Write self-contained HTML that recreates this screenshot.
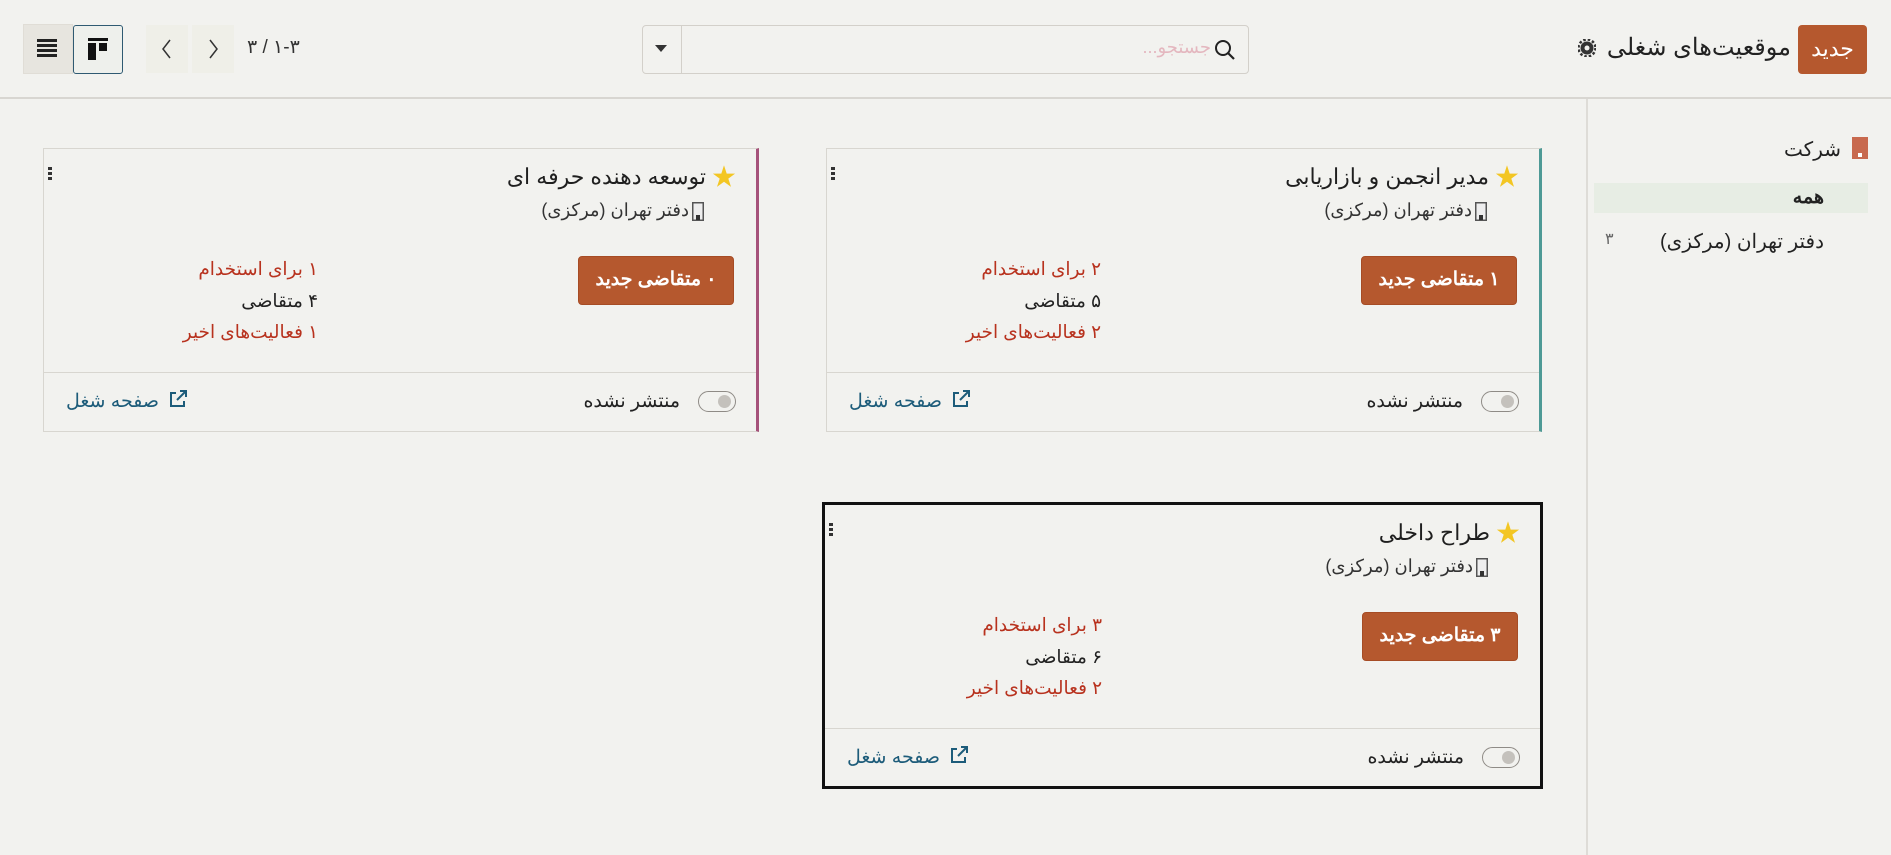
<!DOCTYPE html>
<html><head><meta charset="utf-8"><style>
*{box-sizing:border-box;margin:0;padding:0}
body{width:1891px;height:855px;background:#f2f2ef;font-family:"Liberation Sans","Noto Sans CJK SC",sans-serif;color:#222;position:relative;overflow:hidden}
.a{position:absolute;white-space:nowrap}
.card{position:absolute;width:716px;height:284px;background:#f2f2ef;border:1px solid #d8d6d0}
.card .t{position:absolute;right:50px;top:15px;font-size:22px;color:#1f1f1f;direction:rtl}
.card .star{position:absolute;right:20px;top:17px;color:#f3c623;font-size:24px;line-height:24px}
.card .loc{position:absolute;right:67px;top:51px;font-size:18px;direction:rtl;color:#333}
.card .bi{position:absolute;right:52px;top:53px}
.card .btn{position:absolute;right:22px;top:107px;width:156px;height:49px;background:#b5582e;border:1px solid #a64c25;border-radius:4px;color:#fff;font-weight:bold;font-size:19px;text-align:center;line-height:46px;direction:rtl}
.card .st{position:absolute;right:438px;top:104px;font-size:18.5px;line-height:31.5px;text-align:right;direction:rtl}
.r{color:#b8321e}
.card .ft{position:absolute;left:0;right:0;top:223px;border-top:1px solid #d8d6d0}
.card .tg{position:absolute;right:20px;top:242px;width:38px;height:21px;border:1.5px solid #8f8b86;border-radius:11px}
.card .tg:after{content:"";position:absolute;right:4px;top:3px;width:13px;height:13px;border-radius:50%;background:#c4c1bc}
.card .un{position:absolute;right:76px;top:241px;font-size:19px;direction:rtl}
.card .lk{position:absolute;left:22px;top:241px;font-size:19px;color:#1d5c7a;direction:rtl}
.card .lki{position:absolute;left:124px;top:240px}
.card .kb{position:absolute;left:4px;top:18px;width:4px;font-size:0}
.card .kb b{display:block;width:4px;height:3px;background:#333;margin-bottom:2px}
</style></head><body>
<div class="a" style="left:23px;top:24px;width:50px;height:50px;background:#e7e5df;border:1px solid #e0ddd6"></div>
<svg class="a" style="left:37px;top:39px" width="20" height="18"><rect y="0" width="20" height="3" fill="#222"/><rect y="5" width="20" height="3" fill="#222"/><rect y="10" width="20" height="3" fill="#222"/><rect y="15" width="20" height="3" fill="#222"/></svg>
<div class="a" style="left:73px;top:25px;width:50px;height:49px;border:1.5px solid #2f5a72;border-radius:3px;background:#eef0ec"></div>
<svg class="a" style="left:88px;top:38px" width="20" height="22"><rect width="20" height="3" fill="#111"/><rect y="5" width="8" height="17" fill="#111"/><rect x="11" y="5" width="8" height="8" fill="#111"/></svg>
<div class="a" style="left:146px;top:25px;width:42px;height:48px;background:#efefe8"></div>
<div class="a" style="left:192px;top:25px;width:42px;height:48px;background:#efefe8"></div>
<svg class="a" style="left:160px;top:38px" width="14" height="22"><path d="M10 2 L3 11 L10 20" stroke="#333" stroke-width="1.5" fill="none"/></svg>
<svg class="a" style="left:206px;top:38px" width="14" height="22"><path d="M4 2 L11 11 L4 20" stroke="#333" stroke-width="1.5" fill="none"/></svg>
<svg class="a" style="left:247px;top:34px" width="60" height="26"><text x="0" y="19" font-size="19" fill="#333" font-family="Liberation Sans, DejaVu Sans, sans-serif" direction="ltr" unicode-bidi="bidi-override">۳ / ۱-۳</text></svg>
<div class="a" style="left:642px;top:25px;width:607px;height:49px;border:1px solid #d3d0ca;border-radius:4px;background:#f2f2ef"></div>
<div class="a" style="left:681px;top:26px;width:1px;height:47px;background:#d3d0ca"></div>
<svg class="a" style="left:655px;top:45px" width="12" height="8"><path d="M0 0 L12 0 L6 7Z" fill="#333"/></svg>
<div class="a" style="right:680px;top:37px;font-size:18px;color:#e4b7bf;direction:rtl">جستجو...</div>
<svg class="a" style="left:1214px;top:39px" width="22" height="22"><circle cx="9" cy="9" r="7" stroke="#222" stroke-width="2" fill="none"/><path d="M14 14 L20 20" stroke="#222" stroke-width="2.2"/></svg>
<div class="a" style="left:1798px;top:25px;width:69px;height:49px;background:#b5582e;border-radius:4px;color:#fff;font-size:22px;text-align:center;line-height:47px">جدید</div>
<div class="a" style="right:100px;top:33px;font-size:24px;color:#222;direction:rtl">موقعیت‌های شغلی</div>
<svg class="a" style="left:1578px;top:39px" width="18" height="18"><circle cx="9" cy="9" r="6.5" fill="#333"/><circle cx="9" cy="9" r="8.5" fill="none" stroke="#333" stroke-width="2.5" stroke-dasharray="2.5 2"/><circle cx="9" cy="9" r="2.5" fill="#f2f2ef"/></svg>
<div class="a" style="left:0;top:97px;width:1891px;height:2px;background:#d8d6d1"></div>
<div class="a" style="left:1586px;top:99px;width:2px;height:756px;background:#dedcd7"></div>
<div class="a" style="left:1852px;top:137px;width:16px;height:22px;background:#c8694e"></div>
<div class="a" style="left:1858px;top:153px;width:4px;height:4px;background:#fff"></div>
<div class="a" style="right:50px;top:137px;font-size:20px;direction:rtl">شرکت</div>
<div class="a" style="left:1594px;top:183px;width:274px;height:30px;background:#e7ede4"></div>
<div class="a" style="right:67px;top:186px;font-size:19px;font-weight:bold">همه</div>
<div class="a" style="right:67px;top:229px;font-size:20px;direction:rtl">دفتر تهران (مرکزی)</div>
<div class="a" style="left:1605px;top:229px;font-size:16px;color:#666">۳</div>

<div class="card" style="left:826px;top:148px;border-right:3px solid #4e9a96">
<div class="star">★</div><div class="t">مدیر انجمن و بازاریابی</div>
<svg class="bi" width="12" height="19"><rect x="0.75" y="0.75" width="10.5" height="17.5" fill="#eee" stroke="#555" stroke-width="1.5"/><rect x="4" y="13" width="4" height="5" fill="#333"/></svg>
<div class="loc">دفتر تهران (مرکزی)</div>
<div class="kb"><b></b><b></b><b></b></div>
<div class="btn">۱ متقاضی جدید</div>
<div class="st"><div class="r">۲ برای استخدام</div><div>۵ متقاضی</div><div class="r">۲ فعالیت‌های اخیر</div></div>
<div class="ft"></div><div class="tg"></div><div class="un">منتشر نشده</div>
<svg class="lki" width="20" height="20"><path d="M8 4 H3 V17 H16 V12" fill="none" stroke="#1d5c7a" stroke-width="2"/><path d="M9 11 L17 3 M12 2 H18 V8" fill="none" stroke="#1d5c7a" stroke-width="2"/></svg>
<div class="lk">صفحه شغل</div>
</div>

<div class="card" style="left:43px;top:148px;border-right:3px solid #a5527a">
<div class="star">★</div><div class="t">توسعه دهنده حرفه ای</div>
<svg class="bi" width="12" height="19"><rect x="0.75" y="0.75" width="10.5" height="17.5" fill="#eee" stroke="#555" stroke-width="1.5"/><rect x="4" y="13" width="4" height="5" fill="#333"/></svg>
<div class="loc">دفتر تهران (مرکزی)</div>
<div class="kb"><b></b><b></b><b></b></div>
<div class="btn">۰ متقاضی جدید</div>
<div class="st"><div class="r">۱ برای استخدام</div><div>۴ متقاضی</div><div class="r">۱ فعالیت‌های اخیر</div></div>
<div class="ft"></div><div class="tg"></div><div class="un">منتشر نشده</div>
<svg class="lki" width="20" height="20"><path d="M8 4 H3 V17 H16 V12" fill="none" stroke="#1d5c7a" stroke-width="2"/><path d="M9 11 L17 3 M12 2 H18 V8" fill="none" stroke="#1d5c7a" stroke-width="2"/></svg>
<div class="lk">صفحه شغل</div>
</div>

<div class="card" style="left:822px;top:502px;width:721px;height:287px;border:3px solid #111">
<div class="star">★</div><div class="t">طراح داخلی</div>
<svg class="bi" width="12" height="19"><rect x="0.75" y="0.75" width="10.5" height="17.5" fill="#eee" stroke="#555" stroke-width="1.5"/><rect x="4" y="13" width="4" height="5" fill="#333"/></svg>
<div class="loc">دفتر تهران (مرکزی)</div>
<div class="kb"><b></b><b></b><b></b></div>
<div class="btn">۳ متقاضی جدید</div>
<div class="st"><div class="r">۳ برای استخدام</div><div>۶ متقاضی</div><div class="r">۲ فعالیت‌های اخیر</div></div>
<div class="ft"></div><div class="tg"></div><div class="un">منتشر نشده</div>
<svg class="lki" width="20" height="20"><path d="M8 4 H3 V17 H16 V12" fill="none" stroke="#1d5c7a" stroke-width="2"/><path d="M9 11 L17 3 M12 2 H18 V8" fill="none" stroke="#1d5c7a" stroke-width="2"/></svg>
<div class="lk">صفحه شغل</div>
</div>
</body></html>
